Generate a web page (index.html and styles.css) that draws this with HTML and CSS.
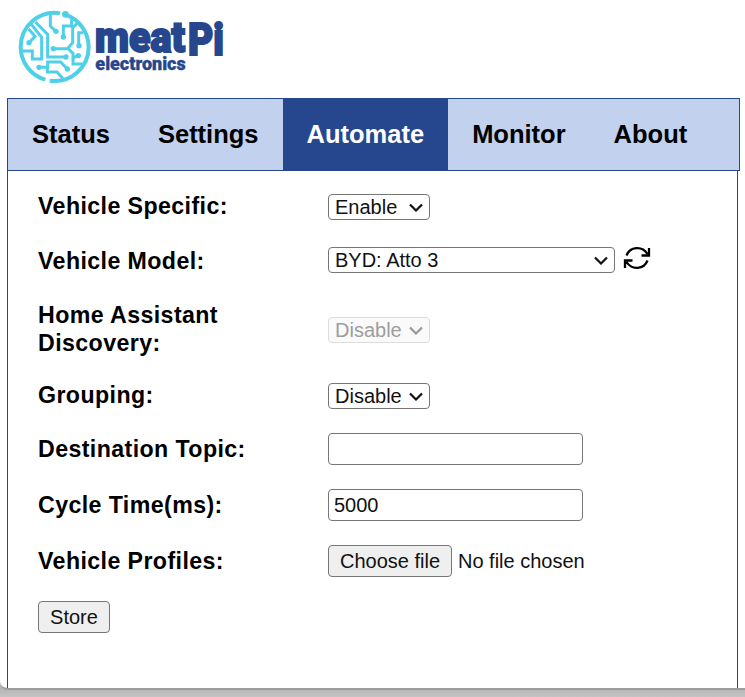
FILE: index.html
```
<!DOCTYPE html>
<html lang="en">
<head>
<meta charset="utf-8">
<title>meatPi electronics</title>
<link rel="stylesheet" href="styles.css">
</head>
<body>
<main class="window">
  <header class="brand">
    <svg class="logo" width="240" height="98" viewBox="0 0 720 294" role="img" aria-label="meatPi electronics">
      <g class="trace">
        <path d="M180 40A102 102 0 0 0 62 141A102 102 0 0 0 136 239M149 242A102 102 0 0 0 266 141A102 102 0 0 0 196 44"/>
        <path d="M87 128L105 109L86 87M94 73L125 112V177H97V153H65M106 66L143 103V171H198M151 42V78L168 94M215 54V78H190V110M160 146H202L218 128V84L235 66M203 144L219 160V174L232 167M250 98H236V136M117 202H143V186H182L202 207M142 202V216H171L188 235M219 168V192H246"/>
      </g>
      <g class="node">
        <circle cx="87" cy="128" r="8"/><circle cx="168" cy="94" r="8"/><circle cx="190" cy="111" r="8"/>
        <circle cx="160" cy="146" r="8"/><circle cx="198" cy="171" r="8"/><circle cx="237" cy="137" r="8"/>
        <circle cx="235" cy="167" r="8"/><circle cx="117" cy="202" r="8"/><circle cx="202" cy="207" r="8"/>
        <circle cx="196" cy="43" r="10"/>
      </g>
      <g class="wordmark">
        <text class="word-main" x="285" y="156" textLength="270" lengthAdjust="spacingAndGlyphs">meat</text>
        <text class="word-pi" x="564" y="164" textLength="108" lengthAdjust="spacingAndGlyphs">Pi</text>
        <text class="word-sub" x="286" y="209" textLength="271" lengthAdjust="spacingAndGlyphs">electronics</text>
      </g>
    </svg>
  </header>
  <nav class="tabs">
    <a class="tab">Status</a><a class="tab">Settings</a><a class="tab active">Automate</a><a class="tab">Monitor</a><a class="tab">About</a>
  </nav>
  <form class="panel">
    <div class="row specific"><label>Vehicle Specific:</label>
      <span class="select"><select><option>Enable</option></select><svg class="chevron" viewBox="0 0 14 9"><path d="M1 1.5L7 7.5L13 1.5"/></svg></span></div>
    <div class="row model"><label>Vehicle Model:</label>
      <span class="select wide"><select><option>BYD: Atto 3</option></select><svg class="chevron" viewBox="0 0 14 9"><path d="M1 1.5L7 7.5L13 1.5"/></svg></span>
      <svg class="refresh" viewBox="0 0 28 24"><path d="M3.5 9.5C7 .5 19 -.5 24.5 8M26 2V9.5H18.5M24.5 14.5C21 23.5 9 24.5 3.5 16M2 22V14.5H9.5"/></svg></div>
    <div class="row discovery"><label>Home Assistant Discovery:</label>
      <span class="select disabled"><select disabled><option>Disable</option></select><svg class="chevron" viewBox="0 0 14 9"><path d="M1 1.5L7 7.5L13 1.5"/></svg></span></div>
    <div class="row grouping"><label>Grouping:</label>
      <span class="select"><select><option>Disable</option></select><svg class="chevron" viewBox="0 0 14 9"><path d="M1 1.5L7 7.5L13 1.5"/></svg></span></div>
    <div class="row topic"><label>Destination Topic:</label><input class="field" type="text"></div>
    <div class="row cycle"><label>Cycle Time(ms):</label><input class="field" type="text" value="5000"></div>
    <div class="row profiles"><label>Vehicle Profiles:</label><button class="btn choose" type="button">Choose file</button><span class="filename">No file chosen</span></div>
    <button class="btn store" type="button">Store</button>
  </form>
</main>
</body>
</html>
```
FILE: styles.css
```
* { box-sizing: border-box; }
body {
  margin: 0;
  height: 697px;
  overflow: hidden;
  background: linear-gradient(#b5b5b5 688px, #c3c3c3 697px);
  font-family: "Liberation Sans", Arial, sans-serif;
  color: #000;
}
.window {
  height: 690px;
  background: #fff;
  border-bottom: 2px solid #9d9d9d;
  border-bottom-left-radius: 8px;
  display: flex;
  flex-direction: column;
}
.brand { height: 98px; flex: none; }
.logo { display: block; }
.trace { fill: none; stroke: #4fd0e9; stroke-width: 9; }
.trace path:first-child { stroke-width: 12; }
.node { fill: #4fd0e9; }
.wordmark { fill: #26478d; stroke: #26478d; font-family: Roboto, sans-serif; font-weight: 900; }
.word-main { font-size: 127px; stroke-width: 6; }
.word-pi { font-size: 132px; stroke-width: 6; }
.word-sub { font-size: 54px; stroke-width: 1; }

.tabs {
  flex: none;
  display: flex;
  width: 733px;
  height: 73px;
  margin-left: 7px;
  border: 1px solid #26478d;
  background: #c2d1ee;
}
.tab {
  padding: 0 24px;
  font-size: 25.5px;
  font-weight: bold;
  line-height: 71px;
}
.tab.active { background: #26478d; color: #fff; }

.panel {
  flex: 1;
  width: 731px;
  margin-left: 7px;
  padding: 0 30px;
  border: solid #26478d;
  border-width: 0 1px;
}
.row { display: flex; align-items: center; }
.row label {
  flex: none;
  width: 290px;
  padding-right: 60px;
  font-size: 23.2px;
  font-weight: bold;
  letter-spacing: .4px;
  line-height: 28px;
}
.specific { height: 72px; }
.model { height: 34px; }
.discovery { height: 106px; }
.grouping { height: 26px; }
.model label { position: relative; top: 1px; }
.discovery label, .grouping label, .specific label { position: relative; top: -1px; }
.topic { height: 32px; margin-top: 24px; }
.cycle, .profiles { height: 32px; margin-top: 24px; }

.select { position: relative; display: block; width: 102px; height: 26px; }
.select.wide { width: 287px; }
select {
  appearance: none;
  display: block;
  width: 100%;
  height: 26px;
  margin: 0;
  padding: 0 6px;
  border: 1px solid #767676;
  border-radius: 4px;
  background: #fff;
  color: #111;
  font: 20px "Liberation Sans", Arial, sans-serif;
}
.select.disabled select { border-color: #dcdcdc; background: #fafafa; color: #9d9d9d; opacity: 1; }
.chevron {
  position: absolute;
  right: 7px;
  top: 9px;
  width: 14px;
  height: 9px;
  fill: none;
  stroke: #111;
  stroke-width: 2.2;
  pointer-events: none;
}
.disabled .chevron { stroke: #999; }
.refresh {
  width: 28px;
  height: 24px;
  margin: -4px 0 0 8px;
  fill: none;
  stroke: #000;
  stroke-width: 2.3;
}
.field {
  width: 255px;
  height: 32px;
  padding: 0 5px;
  border: 1px solid #767676;
  border-radius: 4px;
  font: 20px "Liberation Sans", Arial, sans-serif;
  color: #111;
}
.btn {
  height: 32px;
  margin: 0;
  padding: 0;
  border: 1px solid #767676;
  border-radius: 4px;
  background: #efefef;
  color: #111;
  font: 20px "Liberation Sans", Arial, sans-serif;
}
.choose { width: 124px; }
.store { display: block; width: 72px; margin-top: 24px; }
.filename { margin-left: 6px; font-size: 20px; color: #111; }
```
